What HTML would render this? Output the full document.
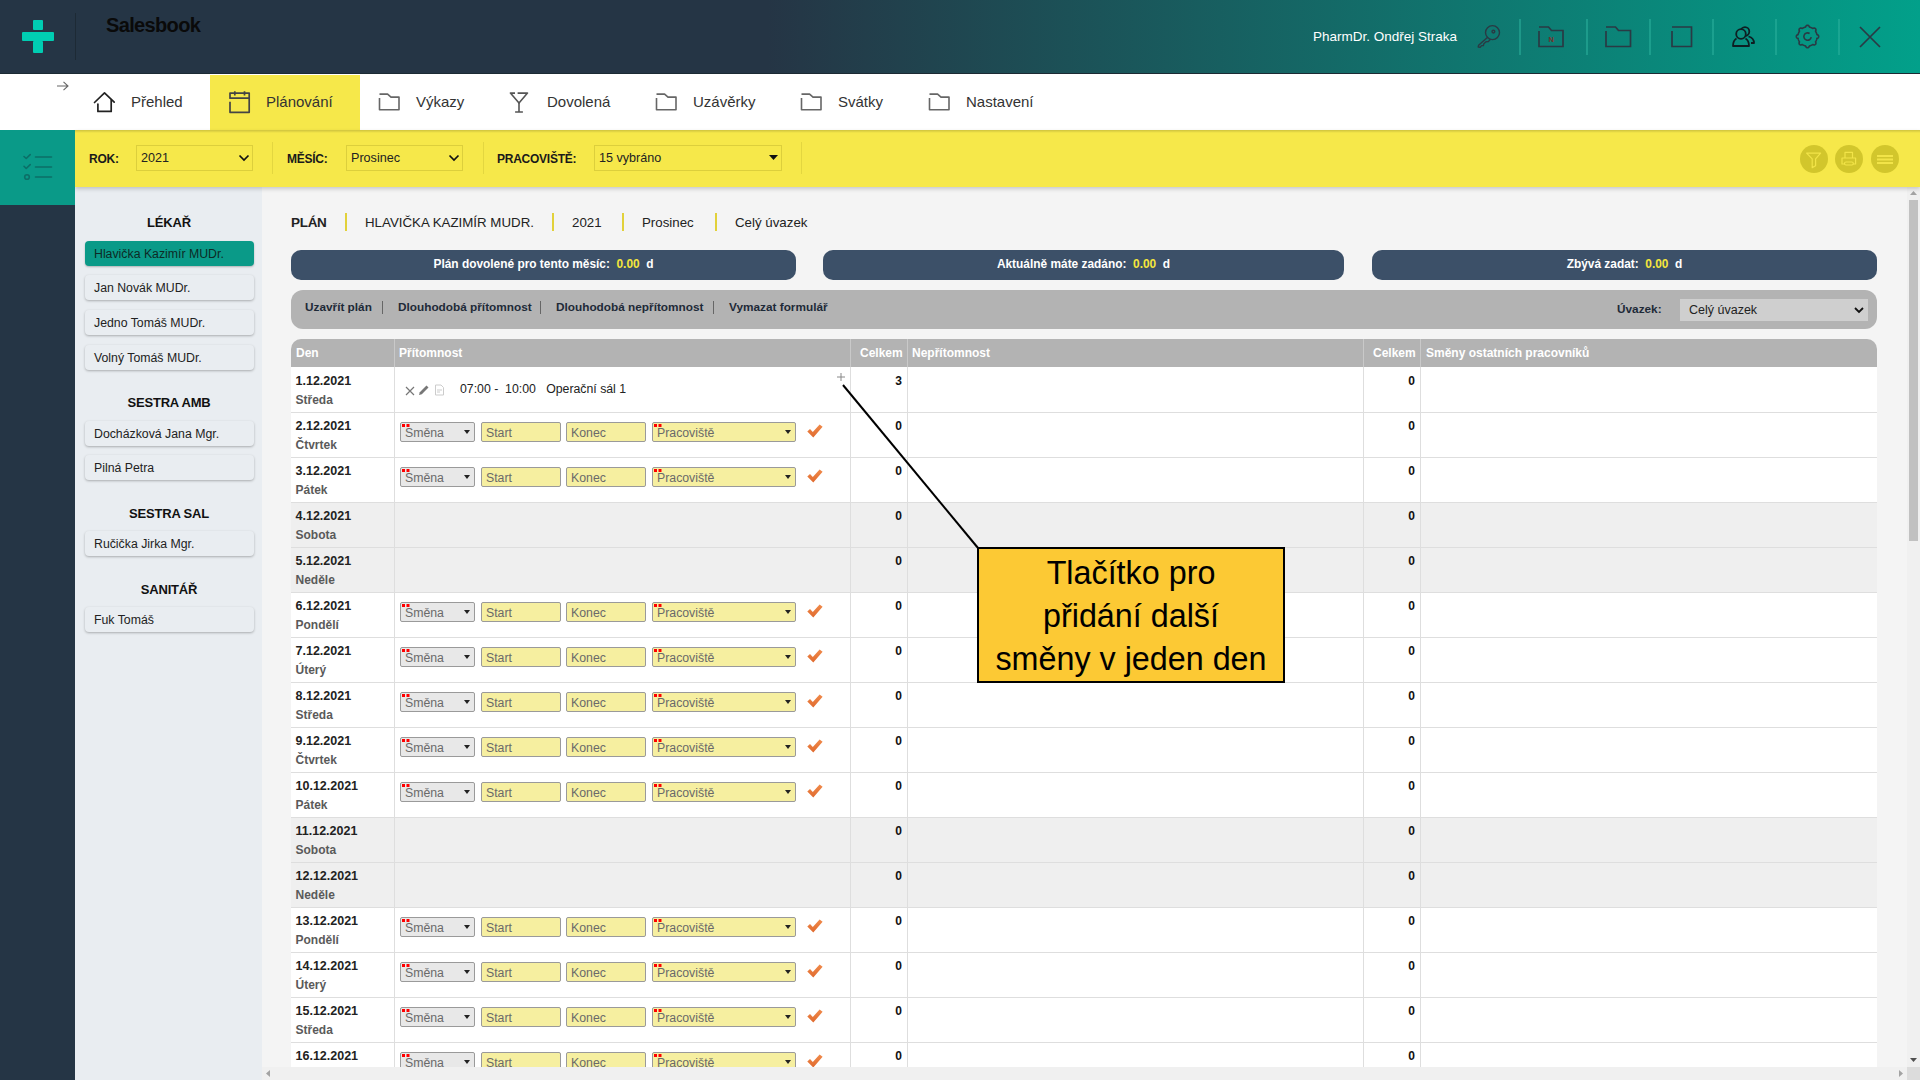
<!DOCTYPE html>
<html><head><meta charset="utf-8">
<style>
*{box-sizing:border-box;margin:0;padding:0}
html,body{width:1920px;height:1080px;overflow:hidden;background:#f4f4f4;font-family:"Liberation Sans",sans-serif;color:#222}
.abs{position:absolute}
svg{position:absolute;overflow:visible}
#hdr{left:0;top:0;width:1920px;height:74px;background:linear-gradient(to right,#253545 0%,#253545 40%,#02a08a 100%);border-bottom:1px solid #1c2a33}
#nav{left:0;top:74px;width:1920px;height:56px;background:#fff}
#fbar{left:75px;top:130px;width:1845px;height:57px;background:#f6e84a;box-shadow:0 2px 4px rgba(0,0,0,.18)}
#tealblk{left:0;top:130px;width:75px;height:75px;background:#0a9a88}
#lside{left:0;top:205px;width:75px;height:875px;background:#253545}
#plist{left:75px;top:187px;width:188px;height:893px;background:#e9edf1}
#main{left:263px;top:187px;width:1640px;height:880px;background:#f4f4f4}
#vscroll{left:1903px;top:187px;width:17px;height:893px;background:#f1f1f1}
#hscroll{left:263px;top:1067px;width:1640px;height:13px;background:#f1f1f1}
.hsep{position:absolute;top:19px;width:2px;height:36px;background:#2bb09c;opacity:.55}
.navt{position:absolute;top:93px;font-size:15px;color:#333;line-height:18px;white-space:nowrap}
.flab{position:absolute;top:152px;font-size:12px;font-weight:700;color:#1a1a1a;line-height:15px;letter-spacing:-0.25px}
.fsel{position:absolute;top:145px;height:26px;border:1px solid #dccf3c;font-size:12.6px;color:#222;line-height:25px;padding-left:4px}
.fvs{position:absolute;top:142px;width:1px;height:32px;background:#e3d640}
.circ{position:absolute;top:145px;width:28px;height:28px;border-radius:50%;background:#d2c62c}
</style>
<style>
.sh{position:absolute;left:75px;width:188px;text-align:center;font-size:13px;margin-top:1px;letter-spacing:-0.2px;font-weight:700;color:#111;line-height:16px}
.si{position:absolute;left:85px;width:169px;height:25px;border-radius:4px;background:#e9edf1;box-shadow:0 1px 2.5px rgba(0,0,0,.28);font-size:12.3px;color:#222;line-height:25px;padding-left:9px;padding-top:1px;white-space:nowrap}
.bc{position:absolute;top:215px;font-size:13.3px;color:#222;line-height:16px;white-space:nowrap}
.bcs{position:absolute;top:213px;width:2px;height:18px;background:#e2d13a}
.ib{position:absolute;top:250px;height:30px;border-radius:10px;background:#3c5068;color:#fff;font-size:11.9px;font-weight:700;line-height:29px;text-align:center;white-space:nowrap}
.ib b{color:#f5e63c}
.al{position:absolute;top:300px;font-size:11.8px;font-weight:700;color:#1e2a38;line-height:15px;white-space:nowrap}
.als{position:absolute;top:301px;width:1px;height:13px;background:#666}
.th{position:absolute;top:346px;font-size:12px;font-weight:700;color:#fff;line-height:14px;white-space:nowrap}
.row{position:absolute;left:291px;width:1586px;height:45px}
.rl{position:absolute;left:291px;width:1586px;height:1px;background:#dedede}
.d1{position:absolute;left:4.5px;top:7px;font-size:12.5px;font-weight:700;color:#222;line-height:14px}
.d2{position:absolute;left:4.5px;top:26px;font-size:12px;font-weight:700;color:#5a5a5a;line-height:14px}
.num{position:absolute;font-size:12px;font-weight:700;color:#111;line-height:14px;text-align:right;width:30px;top:7px}
.ctl{position:absolute;top:10px;height:20px;border:1px solid #9a9a9a;border-radius:2px;font-size:12.3px;color:#6a6a6a;line-height:18px;padding-left:4px;padding-top:1px;white-space:nowrap}
.sm{left:109px;width:75px;background:#e8e8e8}
.st{left:190px;width:80px;background:#f6efa0}
.kn{left:275px;width:80px;background:#f6efa0}
.pr{left:361px;width:144px;background:#f6efa0}
.rd{position:absolute;left:1px;top:1px;width:2.5px;height:2.5px;background:#f00;box-shadow:4.5px 0 0 #f00}
.dd{position:absolute;top:7px;width:0;height:0;border-left:3.5px solid transparent;border-right:3.5px solid transparent;border-top:4px solid #222}
</style>
</head>
<body>
<div id="hdr" class="abs"></div>
<!-- logo -->
<div class="abs" style="left:33px;top:20px;width:10px;height:10px;background:#00cdb2;border-radius:1px"></div>
<div class="abs" style="left:22px;top:32px;width:32px;height:9px;background:#00cdb2;border-radius:1px"></div>
<div class="abs" style="left:33px;top:41px;width:10px;height:12px;background:#00cdb2;border-radius:1px"></div>
<div class="abs" style="left:75px;top:13px;width:1px;height:47px;background:#1d2a35"></div>
<div class="abs" style="left:106px;top:12.5px;font-size:20px;font-weight:700;color:#0a0a0a;line-height:24px;letter-spacing:-0.65px">Salesbook</div>
<div class="abs" style="left:1313px;top:28px;font-size:13.5px;color:#fff;line-height:17px;white-space:nowrap">PharmDr. Ondřej Straka</div>
<!-- header icons -->
<svg style="left:1476px;top:24px" width="26" height="26" viewBox="0 0 26 26" fill="none" stroke="#2a3a44" stroke-width="1.4" stroke-linecap="round" stroke-linejoin="round">
  <circle cx="16.5" cy="8.6" r="7"/><circle cx="17.4" cy="7.6" r="1.4"/>
  <path d="M11.4 13.4 L2.6 21.3 L2.2 23 L4.2 23.2 L5.6 21.6 L7.4 21.6 L7.8 19.8 L10 17.8 L12.3 17.6 L14.2 15.5"/>
</svg>
<div class="hsep" style="left:1519px"></div>
<svg style="left:1538px;top:26px" width="28" height="22" viewBox="0 0 28 22" fill="none" stroke="#2a3a44" stroke-width="1.7">
  <path d="M1 1 L10.5 1 L13.5 4.5 L25 4.5 L25 20.5 L1 20.5 L1 5"/>
  <text x="10.5" y="15.5" font-family="Liberation Sans" font-size="7.5" font-weight="700" fill="#7a2f2a" stroke="none">N</text>
</svg>
<div class="hsep" style="left:1586px"></div>
<svg style="left:1605px;top:26px" width="28" height="22" viewBox="0 0 28 22" fill="none" stroke="#2a3a44" stroke-width="1.7">
  <path d="M1 1 L10.5 1 L13.5 4.5 L25.5 4.5 L25.5 20.5 L1 20.5 L1 5"/>
</svg>
<div class="hsep" style="left:1649px"></div>
<svg style="left:1671px;top:26px" width="22" height="22" viewBox="0 0 22 22" fill="none" stroke="#2a3a44" stroke-width="1.7">
  <path d="M1 1 L20.5 1 L20.5 20.5 L1 20.5 L1 5"/>
</svg>
<div class="hsep" style="left:1712px"></div>
<svg style="left:1732px;top:26px" width="24" height="22" viewBox="0 0 24 22" fill="none" stroke="#0e1e22" stroke-width="1.8" stroke-linejoin="round">
  <circle cx="13" cy="5.5" r="4.3"/>
  <path d="M16.5 10.5 C20 11.5 22 14 22 17 L19 17"/>
  <circle cx="9" cy="8" r="4.8" fill="#0b8f7f"/>
  <path d="M4.5 12.5 C2 14 1 16.5 1 20 L17 20 C17 16.5 16 14 13.5 12.5"/>
</svg>
<div class="hsep" style="left:1775px"></div>
<svg style="left:1795px;top:24px" width="26" height="26" viewBox="0 0 26 26" fill="none" stroke="#2a3a44" stroke-width="1.6" stroke-linejoin="round">
  <path d="M12.50 1.30 L12.94 1.36 L13.36 1.52 L13.77 1.81 L14.13 2.24 L14.37 3.08 L14.74 3.17 L15.11 3.26 L15.47 3.37 L15.82 3.49 L16.17 3.63 L16.52 3.78 L16.86 3.95 L17.19 4.12 L17.52 4.31 L17.83 4.52 L18.61 4.09 L19.16 4.05 L19.65 4.13 L20.07 4.31 L20.42 4.58 L20.69 4.93 L20.87 5.35 L20.95 5.84 L20.91 6.39 L20.48 7.17 L20.69 7.48 L20.88 7.81 L21.05 8.14 L21.22 8.48 L21.37 8.83 L21.51 9.18 L21.63 9.53 L21.74 9.89 L21.83 10.26 L21.92 10.63 L22.76 10.87 L23.19 11.23 L23.48 11.64 L23.64 12.06 L23.70 12.50 L23.64 12.94 L23.48 13.36 L23.19 13.77 L22.76 14.13 L21.92 14.37 L21.83 14.74 L21.74 15.11 L21.63 15.47 L21.51 15.82 L21.37 16.17 L21.22 16.52 L21.05 16.86 L20.88 17.19 L20.69 17.52 L20.48 17.83 L20.91 18.61 L20.95 19.16 L20.87 19.65 L20.69 20.07 L20.42 20.42 L20.07 20.69 L19.65 20.87 L19.16 20.95 L18.61 20.91 L17.83 20.48 L17.52 20.69 L17.19 20.88 L16.86 21.05 L16.52 21.22 L16.17 21.37 L15.82 21.51 L15.47 21.63 L15.11 21.74 L14.74 21.83 L14.37 21.92 L14.13 22.76 L13.77 23.19 L13.36 23.48 L12.94 23.64 L12.50 23.70 L12.06 23.64 L11.64 23.48 L11.23 23.19 L10.87 22.76 L10.63 21.92 L10.26 21.83 L9.89 21.74 L9.53 21.63 L9.18 21.51 L8.83 21.37 L8.48 21.22 L8.14 21.05 L7.81 20.88 L7.48 20.69 L7.17 20.48 L6.39 20.91 L5.84 20.95 L5.35 20.87 L4.93 20.69 L4.58 20.42 L4.31 20.07 L4.13 19.65 L4.05 19.16 L4.09 18.61 L4.52 17.83 L4.31 17.52 L4.12 17.19 L3.95 16.86 L3.78 16.52 L3.63 16.17 L3.49 15.82 L3.37 15.47 L3.26 15.11 L3.17 14.74 L3.08 14.37 L2.24 14.13 L1.81 13.77 L1.52 13.36 L1.36 12.94 L1.30 12.50 L1.36 12.06 L1.52 11.64 L1.81 11.23 L2.24 10.87 L3.08 10.63 L3.17 10.26 L3.26 9.89 L3.37 9.53 L3.49 9.18 L3.63 8.83 L3.78 8.48 L3.95 8.14 L4.12 7.81 L4.31 7.48 L4.52 7.17 L4.09 6.39 L4.05 5.84 L4.13 5.35 L4.31 4.93 L4.58 4.58 L4.93 4.31 L5.35 4.13 L5.84 4.05 L6.39 4.09 L7.17 4.52 L7.48 4.31 L7.81 4.12 L8.14 3.95 L8.48 3.78 L8.83 3.63 L9.18 3.49 L9.53 3.37 L9.89 3.26 L10.26 3.17 L10.63 3.08 L10.87 2.24 L11.23 1.81 L11.64 1.52 L12.06 1.36 L12.50 1.30 Z"/>
  <path d="M16.2 13.2 A3.7 3.7 0 1 1 14.6 9.5"/>
</svg>
<div class="hsep" style="left:1838px"></div>
<svg style="left:1859px;top:26px" width="22" height="22" viewBox="0 0 22 22" fill="none" stroke="#2a3a44" stroke-width="1.7">
  <path d="M1 1 L21 21 M21 1 L1 21"/>
</svg>

<div id="nav" class="abs"></div>
<div class="abs" style="left:210px;top:75px;width:150px;height:55px;background:#f6e84a"></div>
<svg style="left:56px;top:80px" width="14" height="12" viewBox="0 0 14 12" fill="none" stroke="#666" stroke-width="1.1">
  <path d="M1 6 L12 6 M7.5 1.8 L12 6 L7.5 10.2"/>
</svg>
<svg style="left:92px;top:90px" width="24" height="24" viewBox="0 0 24 24" fill="none" stroke="#222" stroke-width="1.7" stroke-linecap="round" stroke-linejoin="round">
  <path d="M2.5 12.5 L12.5 2.9 L22.2 12.2"/>
  <path d="M5.9 14 L5.9 21.4 L19.2 21.4 L19.2 10"/>
</svg>
<div class="navt" style="left:131px">Přehled</div>
<svg style="left:228px;top:89px" width="24" height="25" viewBox="0 0 24 25" fill="none" stroke="#444" stroke-width="1.7" stroke-linejoin="round">
  <path d="M2 12.7 L2 23.3 L21.2 23.3 L21.2 4.1 L2 4.1 L2 9.2 L21.2 9.2"/>
  <path d="M6.8 2.2 L6.8 6.4 M16.5 2.2 L16.5 6.4"/>
</svg>
<div class="navt" style="left:266px">Plánování</div>
<svg style="left:377px;top:90px" width="24" height="22" viewBox="0 0 24 22" fill="none" stroke="#666" stroke-width="1.6" stroke-linejoin="round">
  <path d="M2.5 4.1 L10.6 4.1 L14 7.1 L22 7.1 L22 19.8 L2.5 19.8 L2.5 8"/>
</svg>
<div class="navt" style="left:416px">Výkazy</div>
<svg style="left:508px;top:90px" width="22" height="24" viewBox="0 0 22 24" fill="none" stroke="#555" stroke-width="1.6" stroke-linejoin="round">
  <path d="M7 3.1 L2.4 3.1 L11 13.1 L19.5 3.1 L9.6 3.1"/>
  <path d="M11 13.1 L11 22 M7.1 22 L14.9 22"/>
</svg>
<div class="navt" style="left:547px">Dovolená</div>
<svg style="left:654px;top:90px" width="24" height="22" viewBox="0 0 24 22" fill="none" stroke="#666" stroke-width="1.6" stroke-linejoin="round">
  <path d="M2.5 4.1 L10.6 4.1 L14 7.1 L22 7.1 L22 19.8 L2.5 19.8 L2.5 8"/>
</svg>
<div class="navt" style="left:693px">Uzávěrky</div>
<svg style="left:799px;top:90px" width="24" height="22" viewBox="0 0 24 22" fill="none" stroke="#666" stroke-width="1.6" stroke-linejoin="round">
  <path d="M2.5 4.1 L10.6 4.1 L14 7.1 L22 7.1 L22 19.8 L2.5 19.8 L2.5 8"/>
</svg>
<div class="navt" style="left:838px">Svátky</div>
<svg style="left:927px;top:90px" width="24" height="22" viewBox="0 0 24 22" fill="none" stroke="#666" stroke-width="1.6" stroke-linejoin="round">
  <path d="M2.5 4.1 L10.6 4.1 L14 7.1 L22 7.1 L22 19.8 L2.5 19.8 L2.5 8"/>
</svg>
<div class="navt" style="left:966px">Nastavení</div>

<div id="lside" class="abs"></div>
<div id="plist" class="abs"></div>
<div class="abs" style="left:262px;top:187px;width:1645px;height:880px;background:#f4f4f4"></div>
<div class="sh" style="top:214px">LÉKAŘ</div>
<div class="si" style="top:241px;background:#0a9a88;box-shadow:0 1px 2px rgba(0,0,0,.25);color:#0d2a26">Hlavička Kazimír MUDr.</div>
<div class="si" style="top:275px">Jan Novák MUDr.</div>
<div class="si" style="top:310px">Jedno Tomáš MUDr.</div>
<div class="si" style="top:345px">Volný Tomáš MUDr.</div>
<div class="sh" style="top:394px">SESTRA AMB</div>
<div class="si" style="top:421px">Docházková Jana Mgr.</div>
<div class="si" style="top:455px">Pilná Petra</div>
<div class="sh" style="top:505px">SESTRA SAL</div>
<div class="si" style="top:531px">Ručička Jirka Mgr.</div>
<div class="sh" style="top:581px">SANITÁŘ</div>
<div class="si" style="top:607px">Fuk Tomáš</div>
<div class="bc" style="left:291px;font-weight:700;font-size:13.5px;letter-spacing:-0.3px">PLÁN</div>
<div class="bcs" style="left:345px"></div>
<div class="bc" style="left:365px">HLAVIČKA KAZIMÍR MUDR.</div>
<div class="bcs" style="left:552px"></div>
<div class="bc" style="left:572px">2021</div>
<div class="bcs" style="left:622px"></div>
<div class="bc" style="left:642px">Prosinec</div>
<div class="bcs" style="left:715px"></div>
<div class="bc" style="left:735px">Celý úvazek</div>
<div class="ib" style="left:291px;width:505px">Plán dovolené pro tento měsíc: &nbsp;<b>0.00</b> &nbsp;d</div>
<div class="ib" style="left:823px;width:521px">Aktuálně máte zadáno: &nbsp;<b>0.00</b> &nbsp;d</div>
<div class="ib" style="left:1372px;width:505px">Zbývá zadat: &nbsp;<b>0.00</b> &nbsp;d</div>
<div class="abs" style="left:291px;top:290px;width:1586px;height:39px;border-radius:12px;background:#b3b3b3"></div>
<div class="al" style="left:305px">Uzavřít plán</div>
<div class="als" style="left:382px"></div>
<div class="al" style="left:398px">Dlouhodobá přítomnost</div>
<div class="als" style="left:540px"></div>
<div class="al" style="left:556px">Dlouhodobá nepřítomnost</div>
<div class="als" style="left:713px"></div>
<div class="al" style="left:729px">Vymazat formulář</div>
<div class="al" style="left:1617px;top:301.5px">Úvazek:</div>
<div class="abs" style="left:1680px;top:299px;width:188px;height:22px;background:#cfcfcf;font-size:12.5px;color:#222;line-height:22px;padding-left:9px">Celý úvazek</div>
<svg style="left:1854px;top:307px" width="10" height="7" viewBox="0 0 10 7" fill="none" stroke="#111" stroke-width="1.8"><path d="M1 1 L5 5 L9 1"/></svg>
<div class="abs" style="left:291px;top:339px;width:1586px;height:28px;border-radius:10px 10px 0 0;background:#b3b3b3"></div>
<div class="abs" style="left:394px;top:339px;width:1px;height:28px;background:#c9c9c9"></div>
<div class="abs" style="left:850px;top:339px;width:1px;height:28px;background:#c9c9c9"></div>
<div class="abs" style="left:907px;top:339px;width:1px;height:28px;background:#c9c9c9"></div>
<div class="abs" style="left:1363px;top:339px;width:1px;height:28px;background:#c9c9c9"></div>
<div class="abs" style="left:1420px;top:339px;width:1px;height:28px;background:#c9c9c9"></div>
<div class="th" style="left:296px">Den</div>
<div class="th" style="left:399px">Přítomnost</div>
<div class="th" style="left:860px">Celkem</div>
<div class="th" style="left:912px">Nepřítomnost</div>
<div class="th" style="left:1373px">Celkem</div>
<div class="th" style="left:1426px">Směny ostatních pracovníků</div>
<div class="row" style="top:367px;background:#fff"><div class="d1">1.12.2021</div><div class="d2">Středa</div><svg style="left:114px;top:19px" width="10" height="10" viewBox="0 0 10 10" fill="none" stroke="#777" stroke-width="1.2"><path d="M1 1 L9 9 M9 1 L1 9"/></svg><svg style="left:127px;top:17px" width="12" height="12" viewBox="0 0 12 12"><path d="M1 11 L1.8 8.2 L8.5 1.5 L10.5 3.5 L3.8 10.2 Z" fill="#777"/></svg><svg style="left:143px;top:17px" width="12" height="12" viewBox="0 0 12 12" fill="none" stroke="#ccc" stroke-width="1"><path d="M1.5 1 L7 1 L9.5 3.5 L9.5 11 L1.5 11 Z M3 6 L8 6 M3 8 L6 8"/></svg><div class="abs" style="left:169px;top:15px;font-size:12.3px;color:#222;line-height:14px;white-space:pre">07:00 -  10:00   Operační sál 1</div><svg style="left:546px;top:6px" width="8" height="8" viewBox="0 0 8 8" fill="none" stroke="#888" stroke-width="1"><path d="M4 0 L4 8 M0 4 L8 4"/></svg><div class="num" style="left:581px">3</div><div class="num" style="left:1094px">0</div><div class="abs" style="left:103px;top:0;width:1px;height:45px;background:#dedede"></div><div class="abs" style="left:559px;top:0;width:1px;height:45px;background:#dedede"></div><div class="abs" style="left:616px;top:0;width:1px;height:45px;background:#dedede"></div><div class="abs" style="left:1072px;top:0;width:1px;height:45px;background:#dedede"></div><div class="abs" style="left:1129px;top:0;width:1px;height:45px;background:#dedede"></div></div>
<div class="row" style="top:412px;background:#fff"><div class="d1">2.12.2021</div><div class="d2">Čtvrtek</div><div class="ctl sm"><div class="rd"></div>Směna<div class="dd" style="left:63px"></div></div><div class="ctl st">Start</div><div class="ctl kn">Konec</div><div class="ctl pr"><div class="rd"></div>Pracoviště<div class="dd" style="left:132px"></div></div><svg style="left:516px;top:12px" width="16" height="15" viewBox="0 0 16 15"><defs><linearGradient id="cg" x1="0" y1="0" x2="0" y2="1"><stop offset="0" stop-color="#f08a4a"/><stop offset="1" stop-color="#e06a2e"/></linearGradient></defs><path d="M0.3 7.6 L3 5 L5.8 8 L12.6 0.6 L15.6 2.8 L6.3 13.6 Z" fill="url(#cg)"/></svg><div class="num" style="left:581px">0</div><div class="num" style="left:1094px">0</div><div class="abs" style="left:103px;top:0;width:1px;height:45px;background:#dedede"></div><div class="abs" style="left:559px;top:0;width:1px;height:45px;background:#dedede"></div><div class="abs" style="left:616px;top:0;width:1px;height:45px;background:#dedede"></div><div class="abs" style="left:1072px;top:0;width:1px;height:45px;background:#dedede"></div><div class="abs" style="left:1129px;top:0;width:1px;height:45px;background:#dedede"></div></div><div class="rl" style="top:412px"></div>
<div class="row" style="top:457px;background:#fff"><div class="d1">3.12.2021</div><div class="d2">Pátek</div><div class="ctl sm"><div class="rd"></div>Směna<div class="dd" style="left:63px"></div></div><div class="ctl st">Start</div><div class="ctl kn">Konec</div><div class="ctl pr"><div class="rd"></div>Pracoviště<div class="dd" style="left:132px"></div></div><svg style="left:516px;top:12px" width="16" height="15" viewBox="0 0 16 15"><defs><linearGradient id="cg" x1="0" y1="0" x2="0" y2="1"><stop offset="0" stop-color="#f08a4a"/><stop offset="1" stop-color="#e06a2e"/></linearGradient></defs><path d="M0.3 7.6 L3 5 L5.8 8 L12.6 0.6 L15.6 2.8 L6.3 13.6 Z" fill="url(#cg)"/></svg><div class="num" style="left:581px">0</div><div class="num" style="left:1094px">0</div><div class="abs" style="left:103px;top:0;width:1px;height:45px;background:#dedede"></div><div class="abs" style="left:559px;top:0;width:1px;height:45px;background:#dedede"></div><div class="abs" style="left:616px;top:0;width:1px;height:45px;background:#dedede"></div><div class="abs" style="left:1072px;top:0;width:1px;height:45px;background:#dedede"></div><div class="abs" style="left:1129px;top:0;width:1px;height:45px;background:#dedede"></div></div><div class="rl" style="top:457px"></div>
<div class="row" style="top:502px;background:#efefef"><div class="d1">4.12.2021</div><div class="d2">Sobota</div><div class="num" style="left:581px">0</div><div class="num" style="left:1094px">0</div><div class="abs" style="left:103px;top:0;width:1px;height:45px;background:#dedede"></div><div class="abs" style="left:559px;top:0;width:1px;height:45px;background:#dedede"></div><div class="abs" style="left:616px;top:0;width:1px;height:45px;background:#dedede"></div><div class="abs" style="left:1072px;top:0;width:1px;height:45px;background:#dedede"></div><div class="abs" style="left:1129px;top:0;width:1px;height:45px;background:#dedede"></div></div><div class="rl" style="top:502px"></div>
<div class="row" style="top:547px;background:#efefef"><div class="d1">5.12.2021</div><div class="d2">Neděle</div><div class="num" style="left:581px">0</div><div class="num" style="left:1094px">0</div><div class="abs" style="left:103px;top:0;width:1px;height:45px;background:#dedede"></div><div class="abs" style="left:559px;top:0;width:1px;height:45px;background:#dedede"></div><div class="abs" style="left:616px;top:0;width:1px;height:45px;background:#dedede"></div><div class="abs" style="left:1072px;top:0;width:1px;height:45px;background:#dedede"></div><div class="abs" style="left:1129px;top:0;width:1px;height:45px;background:#dedede"></div></div><div class="rl" style="top:547px"></div>
<div class="row" style="top:592px;background:#fff"><div class="d1">6.12.2021</div><div class="d2">Pondělí</div><div class="ctl sm"><div class="rd"></div>Směna<div class="dd" style="left:63px"></div></div><div class="ctl st">Start</div><div class="ctl kn">Konec</div><div class="ctl pr"><div class="rd"></div>Pracoviště<div class="dd" style="left:132px"></div></div><svg style="left:516px;top:12px" width="16" height="15" viewBox="0 0 16 15"><defs><linearGradient id="cg" x1="0" y1="0" x2="0" y2="1"><stop offset="0" stop-color="#f08a4a"/><stop offset="1" stop-color="#e06a2e"/></linearGradient></defs><path d="M0.3 7.6 L3 5 L5.8 8 L12.6 0.6 L15.6 2.8 L6.3 13.6 Z" fill="url(#cg)"/></svg><div class="num" style="left:581px">0</div><div class="num" style="left:1094px">0</div><div class="abs" style="left:103px;top:0;width:1px;height:45px;background:#dedede"></div><div class="abs" style="left:559px;top:0;width:1px;height:45px;background:#dedede"></div><div class="abs" style="left:616px;top:0;width:1px;height:45px;background:#dedede"></div><div class="abs" style="left:1072px;top:0;width:1px;height:45px;background:#dedede"></div><div class="abs" style="left:1129px;top:0;width:1px;height:45px;background:#dedede"></div></div><div class="rl" style="top:592px"></div>
<div class="row" style="top:637px;background:#fff"><div class="d1">7.12.2021</div><div class="d2">Úterý</div><div class="ctl sm"><div class="rd"></div>Směna<div class="dd" style="left:63px"></div></div><div class="ctl st">Start</div><div class="ctl kn">Konec</div><div class="ctl pr"><div class="rd"></div>Pracoviště<div class="dd" style="left:132px"></div></div><svg style="left:516px;top:12px" width="16" height="15" viewBox="0 0 16 15"><defs><linearGradient id="cg" x1="0" y1="0" x2="0" y2="1"><stop offset="0" stop-color="#f08a4a"/><stop offset="1" stop-color="#e06a2e"/></linearGradient></defs><path d="M0.3 7.6 L3 5 L5.8 8 L12.6 0.6 L15.6 2.8 L6.3 13.6 Z" fill="url(#cg)"/></svg><div class="num" style="left:581px">0</div><div class="num" style="left:1094px">0</div><div class="abs" style="left:103px;top:0;width:1px;height:45px;background:#dedede"></div><div class="abs" style="left:559px;top:0;width:1px;height:45px;background:#dedede"></div><div class="abs" style="left:616px;top:0;width:1px;height:45px;background:#dedede"></div><div class="abs" style="left:1072px;top:0;width:1px;height:45px;background:#dedede"></div><div class="abs" style="left:1129px;top:0;width:1px;height:45px;background:#dedede"></div></div><div class="rl" style="top:637px"></div>
<div class="row" style="top:682px;background:#fff"><div class="d1">8.12.2021</div><div class="d2">Středa</div><div class="ctl sm"><div class="rd"></div>Směna<div class="dd" style="left:63px"></div></div><div class="ctl st">Start</div><div class="ctl kn">Konec</div><div class="ctl pr"><div class="rd"></div>Pracoviště<div class="dd" style="left:132px"></div></div><svg style="left:516px;top:12px" width="16" height="15" viewBox="0 0 16 15"><defs><linearGradient id="cg" x1="0" y1="0" x2="0" y2="1"><stop offset="0" stop-color="#f08a4a"/><stop offset="1" stop-color="#e06a2e"/></linearGradient></defs><path d="M0.3 7.6 L3 5 L5.8 8 L12.6 0.6 L15.6 2.8 L6.3 13.6 Z" fill="url(#cg)"/></svg><div class="num" style="left:581px">0</div><div class="num" style="left:1094px">0</div><div class="abs" style="left:103px;top:0;width:1px;height:45px;background:#dedede"></div><div class="abs" style="left:559px;top:0;width:1px;height:45px;background:#dedede"></div><div class="abs" style="left:616px;top:0;width:1px;height:45px;background:#dedede"></div><div class="abs" style="left:1072px;top:0;width:1px;height:45px;background:#dedede"></div><div class="abs" style="left:1129px;top:0;width:1px;height:45px;background:#dedede"></div></div><div class="rl" style="top:682px"></div>
<div class="row" style="top:727px;background:#fff"><div class="d1">9.12.2021</div><div class="d2">Čtvrtek</div><div class="ctl sm"><div class="rd"></div>Směna<div class="dd" style="left:63px"></div></div><div class="ctl st">Start</div><div class="ctl kn">Konec</div><div class="ctl pr"><div class="rd"></div>Pracoviště<div class="dd" style="left:132px"></div></div><svg style="left:516px;top:12px" width="16" height="15" viewBox="0 0 16 15"><defs><linearGradient id="cg" x1="0" y1="0" x2="0" y2="1"><stop offset="0" stop-color="#f08a4a"/><stop offset="1" stop-color="#e06a2e"/></linearGradient></defs><path d="M0.3 7.6 L3 5 L5.8 8 L12.6 0.6 L15.6 2.8 L6.3 13.6 Z" fill="url(#cg)"/></svg><div class="num" style="left:581px">0</div><div class="num" style="left:1094px">0</div><div class="abs" style="left:103px;top:0;width:1px;height:45px;background:#dedede"></div><div class="abs" style="left:559px;top:0;width:1px;height:45px;background:#dedede"></div><div class="abs" style="left:616px;top:0;width:1px;height:45px;background:#dedede"></div><div class="abs" style="left:1072px;top:0;width:1px;height:45px;background:#dedede"></div><div class="abs" style="left:1129px;top:0;width:1px;height:45px;background:#dedede"></div></div><div class="rl" style="top:727px"></div>
<div class="row" style="top:772px;background:#fff"><div class="d1">10.12.2021</div><div class="d2">Pátek</div><div class="ctl sm"><div class="rd"></div>Směna<div class="dd" style="left:63px"></div></div><div class="ctl st">Start</div><div class="ctl kn">Konec</div><div class="ctl pr"><div class="rd"></div>Pracoviště<div class="dd" style="left:132px"></div></div><svg style="left:516px;top:12px" width="16" height="15" viewBox="0 0 16 15"><defs><linearGradient id="cg" x1="0" y1="0" x2="0" y2="1"><stop offset="0" stop-color="#f08a4a"/><stop offset="1" stop-color="#e06a2e"/></linearGradient></defs><path d="M0.3 7.6 L3 5 L5.8 8 L12.6 0.6 L15.6 2.8 L6.3 13.6 Z" fill="url(#cg)"/></svg><div class="num" style="left:581px">0</div><div class="num" style="left:1094px">0</div><div class="abs" style="left:103px;top:0;width:1px;height:45px;background:#dedede"></div><div class="abs" style="left:559px;top:0;width:1px;height:45px;background:#dedede"></div><div class="abs" style="left:616px;top:0;width:1px;height:45px;background:#dedede"></div><div class="abs" style="left:1072px;top:0;width:1px;height:45px;background:#dedede"></div><div class="abs" style="left:1129px;top:0;width:1px;height:45px;background:#dedede"></div></div><div class="rl" style="top:772px"></div>
<div class="row" style="top:817px;background:#efefef"><div class="d1">11.12.2021</div><div class="d2">Sobota</div><div class="num" style="left:581px">0</div><div class="num" style="left:1094px">0</div><div class="abs" style="left:103px;top:0;width:1px;height:45px;background:#dedede"></div><div class="abs" style="left:559px;top:0;width:1px;height:45px;background:#dedede"></div><div class="abs" style="left:616px;top:0;width:1px;height:45px;background:#dedede"></div><div class="abs" style="left:1072px;top:0;width:1px;height:45px;background:#dedede"></div><div class="abs" style="left:1129px;top:0;width:1px;height:45px;background:#dedede"></div></div><div class="rl" style="top:817px"></div>
<div class="row" style="top:862px;background:#efefef"><div class="d1">12.12.2021</div><div class="d2">Neděle</div><div class="num" style="left:581px">0</div><div class="num" style="left:1094px">0</div><div class="abs" style="left:103px;top:0;width:1px;height:45px;background:#dedede"></div><div class="abs" style="left:559px;top:0;width:1px;height:45px;background:#dedede"></div><div class="abs" style="left:616px;top:0;width:1px;height:45px;background:#dedede"></div><div class="abs" style="left:1072px;top:0;width:1px;height:45px;background:#dedede"></div><div class="abs" style="left:1129px;top:0;width:1px;height:45px;background:#dedede"></div></div><div class="rl" style="top:862px"></div>
<div class="row" style="top:907px;background:#fff"><div class="d1">13.12.2021</div><div class="d2">Pondělí</div><div class="ctl sm"><div class="rd"></div>Směna<div class="dd" style="left:63px"></div></div><div class="ctl st">Start</div><div class="ctl kn">Konec</div><div class="ctl pr"><div class="rd"></div>Pracoviště<div class="dd" style="left:132px"></div></div><svg style="left:516px;top:12px" width="16" height="15" viewBox="0 0 16 15"><defs><linearGradient id="cg" x1="0" y1="0" x2="0" y2="1"><stop offset="0" stop-color="#f08a4a"/><stop offset="1" stop-color="#e06a2e"/></linearGradient></defs><path d="M0.3 7.6 L3 5 L5.8 8 L12.6 0.6 L15.6 2.8 L6.3 13.6 Z" fill="url(#cg)"/></svg><div class="num" style="left:581px">0</div><div class="num" style="left:1094px">0</div><div class="abs" style="left:103px;top:0;width:1px;height:45px;background:#dedede"></div><div class="abs" style="left:559px;top:0;width:1px;height:45px;background:#dedede"></div><div class="abs" style="left:616px;top:0;width:1px;height:45px;background:#dedede"></div><div class="abs" style="left:1072px;top:0;width:1px;height:45px;background:#dedede"></div><div class="abs" style="left:1129px;top:0;width:1px;height:45px;background:#dedede"></div></div><div class="rl" style="top:907px"></div>
<div class="row" style="top:952px;background:#fff"><div class="d1">14.12.2021</div><div class="d2">Úterý</div><div class="ctl sm"><div class="rd"></div>Směna<div class="dd" style="left:63px"></div></div><div class="ctl st">Start</div><div class="ctl kn">Konec</div><div class="ctl pr"><div class="rd"></div>Pracoviště<div class="dd" style="left:132px"></div></div><svg style="left:516px;top:12px" width="16" height="15" viewBox="0 0 16 15"><defs><linearGradient id="cg" x1="0" y1="0" x2="0" y2="1"><stop offset="0" stop-color="#f08a4a"/><stop offset="1" stop-color="#e06a2e"/></linearGradient></defs><path d="M0.3 7.6 L3 5 L5.8 8 L12.6 0.6 L15.6 2.8 L6.3 13.6 Z" fill="url(#cg)"/></svg><div class="num" style="left:581px">0</div><div class="num" style="left:1094px">0</div><div class="abs" style="left:103px;top:0;width:1px;height:45px;background:#dedede"></div><div class="abs" style="left:559px;top:0;width:1px;height:45px;background:#dedede"></div><div class="abs" style="left:616px;top:0;width:1px;height:45px;background:#dedede"></div><div class="abs" style="left:1072px;top:0;width:1px;height:45px;background:#dedede"></div><div class="abs" style="left:1129px;top:0;width:1px;height:45px;background:#dedede"></div></div><div class="rl" style="top:952px"></div>
<div class="row" style="top:997px;background:#fff"><div class="d1">15.12.2021</div><div class="d2">Středa</div><div class="ctl sm"><div class="rd"></div>Směna<div class="dd" style="left:63px"></div></div><div class="ctl st">Start</div><div class="ctl kn">Konec</div><div class="ctl pr"><div class="rd"></div>Pracoviště<div class="dd" style="left:132px"></div></div><svg style="left:516px;top:12px" width="16" height="15" viewBox="0 0 16 15"><defs><linearGradient id="cg" x1="0" y1="0" x2="0" y2="1"><stop offset="0" stop-color="#f08a4a"/><stop offset="1" stop-color="#e06a2e"/></linearGradient></defs><path d="M0.3 7.6 L3 5 L5.8 8 L12.6 0.6 L15.6 2.8 L6.3 13.6 Z" fill="url(#cg)"/></svg><div class="num" style="left:581px">0</div><div class="num" style="left:1094px">0</div><div class="abs" style="left:103px;top:0;width:1px;height:45px;background:#dedede"></div><div class="abs" style="left:559px;top:0;width:1px;height:45px;background:#dedede"></div><div class="abs" style="left:616px;top:0;width:1px;height:45px;background:#dedede"></div><div class="abs" style="left:1072px;top:0;width:1px;height:45px;background:#dedede"></div><div class="abs" style="left:1129px;top:0;width:1px;height:45px;background:#dedede"></div></div><div class="rl" style="top:997px"></div>
<div class="row" style="top:1042px;background:#fff"><div class="d1">16.12.2021</div><div class="d2">Čtvrtek</div><div class="ctl sm"><div class="rd"></div>Směna<div class="dd" style="left:63px"></div></div><div class="ctl st">Start</div><div class="ctl kn">Konec</div><div class="ctl pr"><div class="rd"></div>Pracoviště<div class="dd" style="left:132px"></div></div><svg style="left:516px;top:12px" width="16" height="15" viewBox="0 0 16 15"><defs><linearGradient id="cg" x1="0" y1="0" x2="0" y2="1"><stop offset="0" stop-color="#f08a4a"/><stop offset="1" stop-color="#e06a2e"/></linearGradient></defs><path d="M0.3 7.6 L3 5 L5.8 8 L12.6 0.6 L15.6 2.8 L6.3 13.6 Z" fill="url(#cg)"/></svg><div class="num" style="left:581px">0</div><div class="num" style="left:1094px">0</div><div class="abs" style="left:103px;top:0;width:1px;height:45px;background:#dedede"></div><div class="abs" style="left:559px;top:0;width:1px;height:45px;background:#dedede"></div><div class="abs" style="left:616px;top:0;width:1px;height:45px;background:#dedede"></div><div class="abs" style="left:1072px;top:0;width:1px;height:45px;background:#dedede"></div><div class="abs" style="left:1129px;top:0;width:1px;height:45px;background:#dedede"></div></div><div class="rl" style="top:1042px"></div>
<svg style="left:0;top:0" width="1920" height="1080"><line x1="843" y1="385" x2="978" y2="548" stroke="#000" stroke-width="2"/></svg>
<div class="abs" style="left:977px;top:547px;width:308px;height:136px;background:#fcc934;border:2px solid #000;font-size:32.3px;color:#000;line-height:42.75px;text-align:center;padding-top:3px">Tlačítko pro<br>přidání další<br>směny v jeden den</div>
<div class="abs" style="left:1907px;top:187px;width:13px;height:880px;background:#f0f0f0"></div>
<div class="abs" style="left:1909px;top:200px;width:9px;height:341px;background:#c1c1c1"></div>
<svg style="left:1910px;top:191px" width="7" height="4" viewBox="0 0 7 4"><path d="M0 4 L3.5 0 L7 4 Z" fill="#a3a3a3"/></svg>
<svg style="left:1910px;top:1058px" width="7" height="4" viewBox="0 0 7 4"><path d="M0 0 L3.5 4 L7 0 Z" fill="#505050"/></svg>
<div class="abs" style="left:262px;top:1067px;width:1645px;height:13px;background:#f0f0f0"></div>
<div class="abs" style="left:1907px;top:1067px;width:13px;height:13px;background:#dcdcdc"></div>
<svg style="left:266px;top:1070px" width="4" height="7" viewBox="0 0 4 7"><path d="M4 0 L0 3.5 L4 7 Z" fill="#a3a3a3"/></svg>
<svg style="left:1899px;top:1070px" width="4" height="7" viewBox="0 0 4 7"><path d="M0 0 L4 3.5 L0 7 Z" fill="#a3a3a3"/></svg>
<div id="fbar" class="abs"></div>
<div id="tealblk" class="abs"></div>
<div class="abs" style="left:75px;top:130px;width:1845px;height:3px;background:linear-gradient(rgba(0,0,0,.16),rgba(0,0,0,0))"></div>
<svg style="left:22px;top:152px" width="32" height="30" viewBox="0 0 32 30" fill="none" stroke="#0c6f67" stroke-width="1.6" stroke-linecap="round" stroke-linejoin="round">
  <path d="M2 4.5 L4.2 6.5 L8.2 2.6 M2 14.3 L4.2 16.5 L8.2 12.6"/>
  <circle cx="5" cy="25" r="2.3"/>
  <path d="M13.5 5 L29.5 5 M13.5 15 L29.5 15 M13.5 25 L29.5 25"/>
</svg>
<div class="flab" style="left:89px">ROK:</div>
<div class="fsel" style="left:136px;width:117px">2021</div>
<svg style="left:238px;top:154px" width="12" height="8" viewBox="0 0 12 8" fill="none" stroke="#111" stroke-width="1.7"><path d="M1.5 1.5 L6 6 L10.5 1.5"/></svg>
<div class="fvs" style="left:272px"></div>
<div class="flab" style="left:287px">MĚSÍC:</div>
<div class="fsel" style="left:346px;width:117px">Prosinec</div>
<svg style="left:448px;top:154px" width="12" height="8" viewBox="0 0 12 8" fill="none" stroke="#111" stroke-width="1.7"><path d="M1.5 1.5 L6 6 L10.5 1.5"/></svg>
<div class="fvs" style="left:483px"></div>
<div class="flab" style="left:497px">PRACOVIŠTĚ:</div>
<div class="fsel" style="left:594px;width:188px">15 vybráno</div>
<svg style="left:769px;top:155px" width="9" height="5" viewBox="0 0 9 5"><path d="M0 0 L9 0 L4.5 5 Z" fill="#111"/></svg>
<div class="fvs" style="left:801px"></div>
<div class="circ" style="left:1800px"></div>
<div class="circ" style="left:1835px"></div>
<div class="circ" style="left:1871px"></div>
<svg style="left:1805px;top:151px" width="18" height="18" viewBox="0 0 18 18" fill="none" stroke="#f2e448" stroke-width="1.2" stroke-linejoin="round">
  <path d="M1.6 2.1 L15.6 2.1 L10.6 7.8 L10.6 14.8 L7.2 16.6 L7.2 7.8 Z"/>
</svg>
<svg style="left:1840px;top:151px" width="18" height="18" viewBox="0 0 18 18" fill="none" stroke="#f2e448" stroke-width="1.2" stroke-linejoin="round">
  <path d="M5 7 L5 1.3 L12.5 1.3 L12.5 7"/>
  <path d="M4.5 13 L2 13 L2 7 L15.6 7 L15.6 13 L13 13"/>
  <rect x="4.5" y="11" width="8.8" height="3" rx="1.5"/>
</svg>
<svg style="left:1876px;top:151px" width="18" height="18" viewBox="0 0 18 18" fill="none" stroke="#f2e448" stroke-width="2">
  <path d="M1 4.9 L17 4.9 M1 8.4 L17 8.4 M1 12.1 L17 12.1"/>
</svg>



</body></html>
